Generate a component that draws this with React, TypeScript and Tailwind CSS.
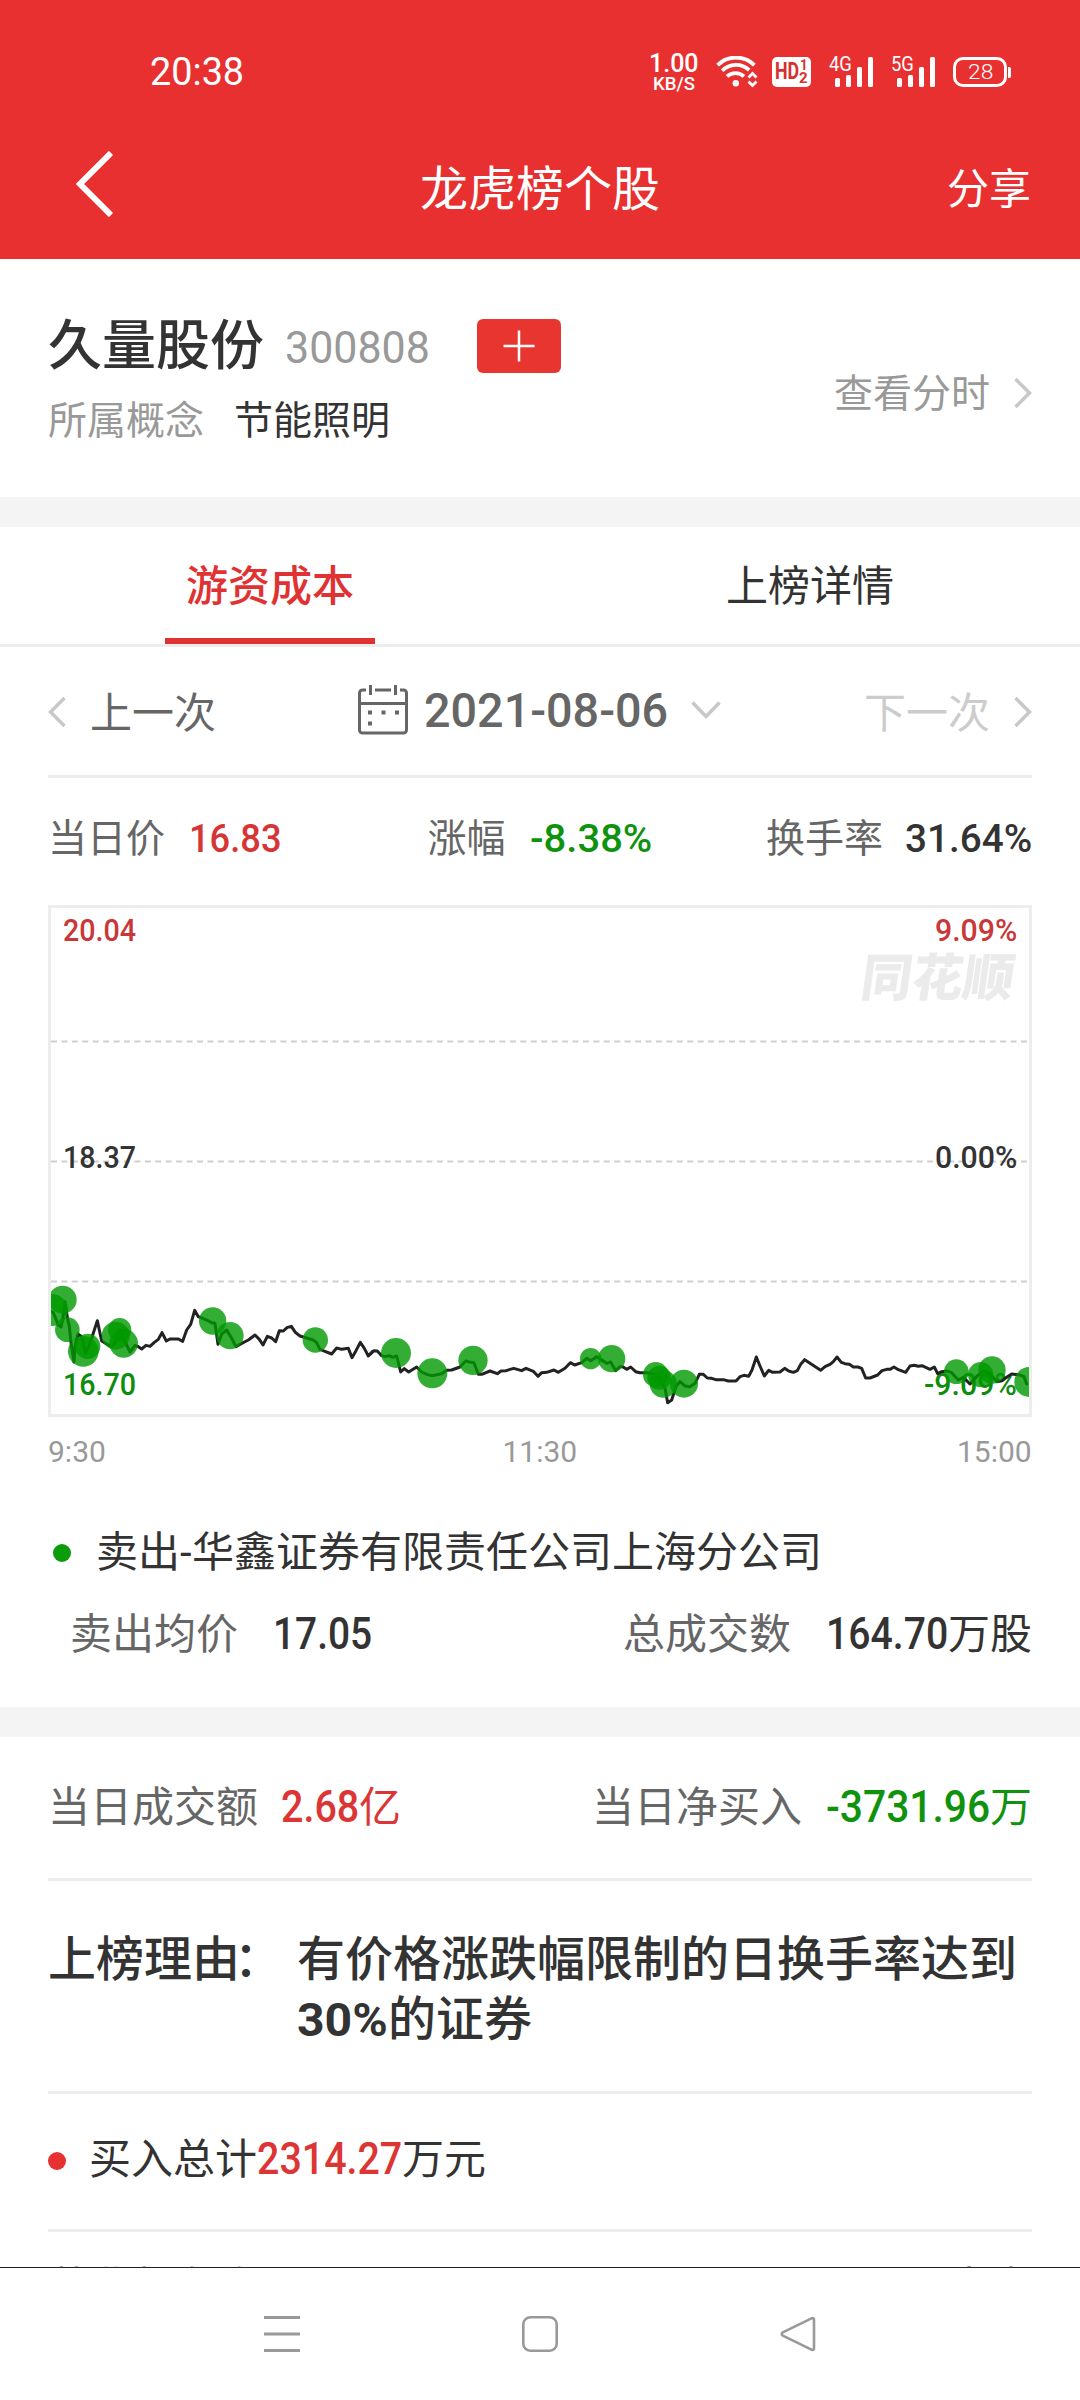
import { useLayoutEffect, useRef, useState, type ReactNode } from 'react';

/** Latin text squeezed horizontally to the width of a narrow DIN-like face. */
function Fit({ w, className = '', children }: { w: number; className?: string; children: ReactNode }) {
  const ref = useRef<HTMLSpanElement>(null);
  const [scale, setScale] = useState(1);
  useLayoutEffect(() => {
    if (ref.current) setScale(w / ref.current.offsetWidth);
  }, [w]);
  return (
    <span className={`inline-block whitespace-nowrap font-['Roboto',sans-serif] ${className}`} style={{ width: w }}>
      <span ref={ref} className="inline-block origin-left" style={{ transform: `scaleX(${scale})` }}>
        {children}
      </span>
    </span>
  );
}

function Chevron({ dir, className = '' }: { dir: 'left' | 'right'; className?: string }) {
  return (
    <svg width="18" height="30" viewBox="0 0 18 30" fill="none" stroke="#c8c8c8" strokeWidth="3.5" className={`shrink-0 ${className}`}>
      <path d={dir === 'left' ? 'M16.5 1 2.5 15l14 14' : 'M1.5 1l14 14-14 14'} />
    </svg>
  );
}

function Signal({ label }: { label: string }) {
  return (
    <div className="relative h-[30px] w-[45px]">
      <Fit w={23} className="absolute left-0 top-0 text-[20px] leading-[15px]">{label}</Fit>
      <svg width="45" height="30" viewBox="0 0 45 30" fill="white">
        <rect x="6" y="21" width="5" height="9" rx="1.5" />
        <rect x="17" y="18" width="5" height="12" rx="1.5" />
        <rect x="28" y="10" width="5" height="20" rx="1.5" />
        <rect x="39" y="0" width="5" height="30" rx="1.5" />
      </svg>
    </div>
  );
}

function StatusBar() {
  return (
    <div className="flex h-[114px] items-start pt-[54px]">
      <Fit w={94} className="ml-[150px] mt-[-1px] text-[39px] leading-[38px]">20:38</Fit>
      <div className="ml-[405px] mt-[-1px] flex w-[50px] flex-col items-center font-medium">
        <Fit w={50} className="h-[20px] text-[26px] leading-[20px]">1.00</Fit>
        <Fit w={42} className="mt-[2px] text-[19px] leading-[17px]">KB/S</Fit>
      </div>
      <svg width="42" height="32" viewBox="0 0 42 32" fill="none" stroke="white" strokeWidth="3.8" className="ml-[17px] mt-[2px]">
        <path d="M1.6 9.2a26 26 0 0 1 36.8 0" />
        <path d="M6.2 14.8a19 19 0 0 1 27 -.6" />
        <path d="M11 20.4a12.5 12.5 0 0 1 17 0" />
        <circle cx="19.8" cy="27.2" r="3.2" fill="white" stroke="none" />
        <path d="M32.5 21.5l4-4 4 4M32.5 25.5l4 4 4-4" strokeWidth="2.8" />
      </svg>
      <div className="relative ml-[14px] mt-[3px] h-[30px] w-[39px] rounded-[5px] bg-white font-bold text-[#d83030]">
        <Fit w={24} className="absolute left-[3px] top-[4px] text-[23px] leading-[22px]">HD</Fit>
        <Fit w={8} className="absolute left-[28px] top-[2px] text-[15px] leading-[13px]">1</Fit>
        <Fit w={9} className="absolute left-[27px] top-[15px] text-[15px] leading-[13px]">2</Fit>
      </div>
      <div className="ml-[18px] mt-[3px] flex gap-[17px]">
        <Signal label="4G" />
        <Signal label="5G" />
      </div>
      <div className="ml-[17px] mt-[3px] flex h-[30px] w-[54px] items-center justify-center rounded-[10px] border-[3px] border-white">
        <Fit w={25} className="text-[21px] font-light leading-[24px]">28</Fit>
      </div>
      <div className="ml-[1px] mt-[13px] h-[11px] w-[3px] rounded-r-[2px] bg-white" />
    </div>
  );
}

const SEGMENTS = [
  {
    shift: 'translate(-54 0)',
    line: '63,245 70,248 85,285 93,291 98,270 105,215 112,262 118,290 122,330 132,396 135,350 144,312 155,320 167,370 178,345 185,325 202,272 215,333 235,345 245,350 255,340 270,300 280,325 300,366 315,346 325,350 335,357 348,346 360,349 372,338 385,328 396,308 409,333 420,327 445,327 458,334 470,300 482,283 494,241 505,260 530,270 545,278 555,280 564,343 575,312 590,300 605,325 618,350 635,340 655,330 675,315 688,328 699,345 712,319 725,324 737,335 748,302 760,303 772,292 784,289 796,307 810,318 830,324 850,330 860,338 870,358 885,364 905,372 920,354 935,358 955,355 966,383 978,362 991,337 1003,355 1015,378 1027,365',
    dots: [[98, 209, 42], [66, 240, 48], [112, 299, 37], [160, 364, 46], [173, 349, 38], [257, 317, 42], [269, 299, 35], [281, 340, 43], [548, 273, 41], [600, 317, 41], [856, 330, 38]],
  },
  {
    shift: 'translate(966 90)',
    line: '0,283 12,272 22,273 35,287 45,290 57,287 68,292 80,288 92,336 103,326 116,336 140,321 155,336 170,343 185,347 215,341 230,331 245,330 270,321 287,303 298,306 312,308 325,343 335,343 360,333 382,341 393,333 408,332 431,325 455,332 468,325 490,334 504,349 515,338 530,337 552,330 565,337 585,325 601,308 614,315 635,308 650,295 662,302 680,290 695,300 710,310 722,306 737,332 750,320 758,320 770,328 782,321 797,335 810,338 830,338 850,342 870,355 885,385 893,428 905,420 918,380 930,365 945,378 960,380 975,370 988,343',
    dots: [[78, 279, 45], [187, 340, 45], [309, 301, 44], [662, 296, 32], [725, 296, 41], [857, 344, 38], [868, 353, 36], [880, 372, 41], [942, 371, 42]],
  },
  {
    shift: 'translate(1956 90)',
    line: '-2,343 10,343 22,354 35,355 47,359 70,359 85,363 108,363 120,350 132,346 146,349 156,330 169,291 180,318 193,348 206,331 218,337 240,336 254,325 266,333 280,337 292,332 302,313 314,299 338,315 362,331 375,320 390,313 400,305 411,291 424,307 435,311 448,313 460,321 474,321 485,325 497,354 510,354 533,345 546,332 560,328 570,328 582,321 595,329 617,337 630,318 642,316 655,319 666,317 690,328 703,321 713,341 725,335 740,333 755,338 775,360 790,352 810,372 830,350 850,332 870,340 890,365 905,362 920,352 935,342 960,345 972,350 980,372',
    dots: [[769, 335, 37], [842, 344, 38], [876, 330, 41], [988, 366, 45]],
  },
];

function Chart() {
  return (
    <div className="relative mx-[48px] h-[512px] border-[3px] border-[#ededed] text-[31px] font-medium leading-[32px]">
      <svg width="978" height="506" viewBox="51 908 978 506" className="absolute left-0 top-0">
        <g stroke="#cfcfcf" strokeWidth="2" strokeDasharray="6 4.43">
          <path d="M51 1041.5H1029" />
          <path d="M51 1161.5H1029" />
          <path d="M51 1281.5H1029" />
        </g>
      </svg>
      <Fit w={73} className="absolute left-[12px] top-[7px] text-[#c93838]">20.04</Fit>
      <Fit w={73} className="absolute left-[12px] top-[234px] text-[#333]">18.37</Fit>
      <Fit w={73} className="absolute left-[12px] top-[461px] text-[#0e8c0e]">16.70</Fit>
      <Fit w={82} className="absolute right-[12px] top-[7px] text-[#c93838]">9.09%</Fit>
      <Fit w={82} className="absolute right-[12px] top-[234px] text-[#333]">0.00%</Fit>
      <Fit w={93} className="absolute right-[12px] top-[461px] text-[#0e8c0e]">-9.09%</Fit>
      <div className="absolute right-[14px] top-[40px] -skew-x-[8deg] text-[51px] font-black leading-[52px] text-[#ebebeb]">同花顺</div>
      <svg width="978" height="506" viewBox="51 908 978 506" className="absolute left-0 top-0">
        <g transform="translate(48 1230) scale(.33333)">
          {SEGMENTS.map((s) => (
            <polyline key={s.shift} transform={s.shift} points={s.line} fill="none" stroke="#222" strokeWidth="9" strokeLinejoin="round" strokeLinecap="round" />
          ))}
          {SEGMENTS.map((s) => (
            <g key={s.shift} transform={s.shift} fill="#009900" fillOpacity=".8">
              {s.dots.map(([x, y, r]) => <circle key={x} cx={x} cy={y} r={r} />)}
            </g>
          ))}
        </g>
      </svg>
    </div>
  );
}

export default function App() {
  return (
    <div className="flex h-[2400px] w-[1080px] flex-col overflow-hidden bg-white font-['Noto_Sans_CJK_SC',sans-serif] text-[#333]">
      <header className="h-[259px] shrink-0 bg-[#e83030] text-white">
        <StatusBar />
        <div className="flex h-[144px] items-center">
          <svg width="38" height="66" viewBox="0 0 38 66" fill="none" stroke="white" strokeWidth="6" className="ml-[76px] mt-[-4px]">
            <path d="M35 2 4 33l31 31" />
          </svg>
          <h1 className="-mt-[2px] ml-[306px] text-[48px] leading-[60px]">龙虎榜个股</h1>
          <span className="-mt-px ml-auto mr-[49px] text-[42px] leading-[60px]">分享</span>
        </div>
      </header>

      <section className="flex h-[238px] shrink-0 px-[48px]">
        <div>
          <div className="mt-[53px] flex h-[64px] items-start">
            <h2 className="text-[54px] font-medium leading-[60px]">久量股份</h2>
            <Fit w={145} className="ml-[21px] mt-[6px] text-[45px] leading-[60px] text-[#999]">300808</Fit>
            <div className="ml-[47px] mt-[7px] flex h-[54px] w-[84px] rounded-[6px] bg-[#e83530]">
              <svg width="32" height="32" viewBox="0 0 32 32" stroke="white" strokeWidth="2.5" className="m-auto">
                <path d="M0.500 16h31M16 .5v31" />
              </svg>
            </div>
          </div>
          <div className="mt-[16px] flex text-[39px] leading-[50px]">
            <span className="text-[#999]">所属概念</span>
            <span className="ml-[30px]">节能照明</span>
          </div>
        </div>
        <div className="ml-auto mt-[107px] flex h-[54px] items-center text-[39px] text-[#999]">
          <span className="-mt-[5px]">查看分时</span>
          <Chevron dir="right" className="ml-[24px]" />
        </div>
      </section>

      <div className="h-[30px] shrink-0 bg-[#f4f4f4]" />

      <nav className="grid h-[120px] shrink-0 grid-cols-2 border-b-[3px] border-[#ededed] text-center text-[42px] leading-[112px]">
        <div className="flex flex-col items-center">
          <span className="h-[111px] font-medium text-[#e03232]">游资成本</span>
          <div className="h-[6px] w-[210px] bg-[#e03232]" />
        </div>
        <div>上榜详情</div>
      </nav>

      <div className="mx-[48px] flex h-[131px] shrink-0 items-center border-b-[3px] border-[#ededed] text-[42px] leading-[60px] text-[#666]">
        <Chevron dir="left" className="mt-[2px]" />
        <span className="-mt-[3px] ml-[24px]">上一次</span>
        <svg width="50" height="50" viewBox="0 0 50 50" fill="none" stroke="#666" strokeWidth="3" className="-mt-[2px] ml-[142px]">
          <path d="M8 5H4.500a3 3 0 0 0-3 3v37a3 3 0 0 0 3 3h41a3 3 0 0 0 3-3V8a3 3 0 0 0-3-3H42M17 5h16M12.500 0v10M37.500 0v10M1.500 18.500h47" />
          <path d="M10 27.500h4M23.500 27.500h4M37 27.500h4M10 38.500h4" strokeWidth="4" />
        </svg>
        <Fit w={244} className="ml-[16px] text-[49px] font-medium leading-[60px]">2021-08-06</Fit>
        <svg width="30" height="18" viewBox="0 0 30 18" fill="none" stroke="#c8c8c8" strokeWidth="3.500" className="-mt-[2px] ml-[23px]">
          <path d="M1.500 1.500 15 15.500 28.500 1.500" />
        </svg>
        <span className="-mt-[3px] ml-auto text-[#ccc]">下一次</span>
        <Chevron dir="right" className="ml-[24px] mt-[2px]" />
      </div>

      <div className="mx-[48px] flex h-[127px] shrink-0 items-baseline justify-between pt-[29px] text-[39px] leading-[56px] text-[#666]">
        <div>当日价<Fit w={93} className="ml-[24px] font-medium text-[#d63535]">16.83</Fit></div>
        <div className="ml-[31px]">涨幅<Fit w={122} className="ml-[24px] font-medium text-[#0f930f]">-8.38%</Fit></div>
        <div>换手率<Fit w={127} className="ml-[22px] font-medium text-[#333]">31.64%</Fit></div>
      </div>

      <div className="shrink-0"><Chart /></div>

      <div className="mx-[48px] mt-[17px] grid h-[36px] shrink-0 grid-cols-3 text-[30px] leading-[36px] text-[#999]">
        <Fit w={58}>9:30</Fit>
        <Fit w={75} className="justify-self-center">11:30</Fit>
        <Fit w={75} className="justify-self-end">15:00</Fit>
      </div>

      <section className="mt-[47px] h-[190px] shrink-0 px-[48px] pt-[2px] text-[42px] leading-[60px]">
        <div className="flex items-center">
          <div className="ml-[5px] mt-[3px] h-[18px] w-[18px] rounded-full bg-[#0a9c0a]" />
          <span className="ml-[25px]">卖出<Fit w={12}>-</Fit>华鑫证券有限责任公司上海分公司</span>
        </div>
        <div className="mt-[18px] flex justify-between pl-[22px]">
          <div><span className="text-[#666]">卖出均价</span><Fit w={99} className="ml-[35px] text-[44px] font-medium">17.05</Fit></div>
          <div><span className="text-[#666]">总成交数</span><Fit w={122} className="ml-[35px] text-[44px] font-medium">164.70</Fit>万股</div>
        </div>
      </section>

      <div className="h-[30px] shrink-0 bg-[#f4f4f4]" />

      <div className="mx-[48px] flex h-[144px] shrink-0 justify-between border-b-[3px] border-[#ededed] pt-[37px] text-[42px] leading-[60px]">
        <div><span className="text-[#666]">当日成交额</span><span className="ml-[23px] text-[#dc3535]"><Fit w={78} className="text-[44px] font-medium">2.68</Fit>亿</span></div>
        <div><span className="text-[#666]">当日净买入</span><span className="ml-[24px] text-[#0f930f]"><Fit w={164} className="text-[44px] font-medium">-3731.96</Fit>万</span></div>
      </div>

      <div className="mx-[48px] flex h-[213px] shrink-0 border-b-[3px] border-[#ededed] pt-[44px] text-[48px] font-medium leading-[60px]">
        <div className="w-[249px] shrink-0">上榜理由<span className="-ml-[6px]">：</span></div>
        <div className="h-[120px]">
          <div className="h-[60px] whitespace-nowrap">有价格涨跌幅限制的日换手率达到</div>
          <div className="h-[60px]"><Fit w={91} className="text-[46px] font-bold">30%</Fit>的证券</div>
        </div>
      </div>

      <div className="mx-[48px] flex h-[138px] shrink-0 items-center border-b-[3px] border-[#ededed] text-[42px] leading-[60px]">
        <div className="mt-[-2px] h-[18px] w-[18px] rounded-full bg-[#e83030]" />
        <span className="mb-[9px] ml-[23px]">买入总计<Fit w={145} className="text-[44px] font-medium text-[#dc3535]">2314.27</Fit>万元</span>
      </div>

      <div className="flex h-[35px] shrink-0 justify-between overflow-hidden px-[48px] pt-[22px] text-[42px] leading-[60px] text-[#999]">
        <span>营业部名称</span>
        <span>买入<Fit w={18}>/</Fit>卖出</span>
      </div>

      <footer className="flex h-[133px] shrink-0 border-t border-[#222] pt-[48px]">
        <svg width="36" height="37" viewBox="0 0 36 37" stroke="#999" strokeWidth="3" className="ml-[264px]">
          <path d="M0 1.500h36M0 18h36M0 34.500h36" />
        </svg>
        <svg width="36" height="36" viewBox="0 0 36 36" fill="none" stroke="#999" strokeWidth="2.600" className="ml-[222px]">
          <rect x="1.300" y="1.300" width="33.400" height="33.400" rx="7" />
        </svg>
        <svg width="36" height="36" viewBox="0 0 36 36" fill="none" stroke="#999" strokeWidth="2.600" strokeLinejoin="round" className="ml-[222px]">
          <path d="M32 2.200 2.800 16.300q-2.200 1.700 0 3.400L32 33.800q2 .6 2-1.500V3.700q0-2.100-2-1.500z" />
        </svg>
      </footer>
    </div>
  );
}
